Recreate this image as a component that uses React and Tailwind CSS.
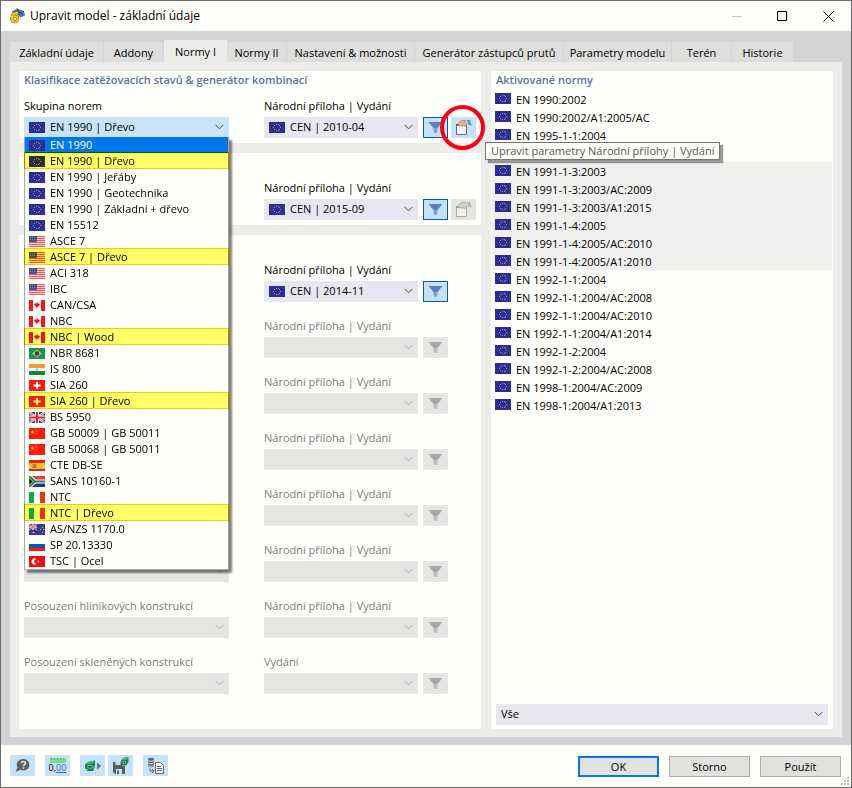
import { useState } from 'react';

const EuFlag = () => (
  <>
    <rect width="16" height="11" fill="#2b2d9b" />
    <path
      d="M7 2h1v1H7zM9 2h1v1H9zM5 3h1v1H5zM10 3h1v1h-1zM4 5h1v1H4zM11 5h1v1h-1zM5 7h1v1H5zM10 7h1v1h-1zM7 8h1v1H7zM9 8h1v1H9z"
      fill="#a89a58"
    />
  </>
);

const UsFlag = () => (
  <>
    <rect width="16" height="11" fill="#fbd5d7" />
    {[0, 2, 4, 6, 8, 10].map((y) => (
      <rect key={y} y={y} width="16" height="1" fill="#f4525a" />
    ))}
    <rect width="8" height="6" fill="#4a4f86" />
    <path d="M1 1.500h6M1 3.500h6" stroke="#7d80aa" strokeDasharray="1 1" />
  </>
);

const CaFlag = () => (
  <>
    <rect width="16" height="11" fill="#fff" />
    <path d="M0 0h4v11H0zM12 0h4v11h-4z" fill="#f8141c" />
    <path d="M8 2l1 1.500 2 .5-.8 2L8.400 7v1.500h-.8V7l-1.800-1L5 4l2-.5z" fill="#f8141c" />
  </>
);

const BrFlag = () => (
  <>
    <rect width="16" height="11" fill="#149552" />
    <path d="M8 1.500L13 5.500 8 9.500 3 5.500z" fill="#c9bd3c" />
    <circle cx="8" cy="5.500" r="2.200" fill="#2f3a86" />
  </>
);

const InFlag = () => (
  <>
    <rect width="16" height="11" fill="#fff" />
    <rect width="16" height="4" fill="#fb9933" />
    <rect y="7" width="16" height="4" fill="#128a2c" />
    <circle cx="8" cy="5.500" r="1.300" fill="#a9acdb" />
  </>
);

const ChFlag = () => (
  <>
    <rect width="16" height="11" fill="#fb1d0b" />
    <path d="M7 2h2v2.500h2.500v2H9V9H7V6.500H4.500v-2H7z" fill="#fff" />
  </>
);

const GbFlag = () => (
  <>
    <rect width="16" height="11" fill="#2b3a8c" />
    <path d="M0 0l16 11M16 0L0 11" stroke="#fff" strokeWidth="2.200" />
    <path d="M0 0l16 11M16 0L0 11" stroke="#e8303a" strokeWidth="0.800" />
    <path d="M8 0v11M0 5.500h16" stroke="#fff" strokeWidth="4" />
    <path d="M8 0v11M0 5.500h16" stroke="#e8202a" strokeWidth="2" />
  </>
);

const CnFlag = () => (
  <>
    <rect width="16" height="11" fill="#fb1d0b" />
    <path d="M3.500 2l.6 1.200 1.400.2-1 1 .2 1.400-1.200-.7-1.300.7.3-1.400-1-1 1.400-.2z" fill="#ffb62e" />
    <path d="M6.500 1.500h1M7.500 3.500h1M6.500 5.500h1" stroke="#f9822a" />
  </>
);

const EsFlag = () => (
  <>
    <rect width="16" height="11" fill="#fb1d0b" />
    <rect y="3" width="16" height="6" fill="#fbc42e" />
    <rect x="3.500" y="4" width="4" height="4" fill="#c5703c" />
  </>
);

const ZaFlag = () => (
  <>
    <rect width="16" height="5.500" fill="#f03c34" />
    <rect y="5.500" width="16" height="5.500" fill="#2b2d9b" />
    <path d="M0 0l6 5.500L0 11M5 5.500h11" fill="none" stroke="#fff" strokeWidth="4" />
    <path d="M0 0l6 5.500L0 11M5 5.500h11" fill="none" stroke="#1b8a5a" strokeWidth="2.200" />
    <path d="M0 2l4 3.500L0 9z" fill="#111" stroke="#d9a83a" strokeWidth="0.600" />
  </>
);

const ItFlag = () => (
  <>
    <rect width="16" height="11" fill="#fff" />
    <rect width="5" height="11" fill="#11aa44" />
    <rect x="11" width="5" height="11" fill="#fb2d11" />
  </>
);

const AuFlag = () => (
  <>
    <rect width="16" height="11" fill="#3b3a85" />
    <path d="M0 0l8 6M8 0L0 6" stroke="#f3c6cc" />
    <path d="M4 0v6M0 3h8" stroke="#fff" strokeWidth="2" />
    <path d="M4 0v6M0 3h8" stroke="#ee3c46" />
    <path d="M3.500 8.500h2M11 5.500h1M13 3.500h1M13 8.500h1M14 5.500h1" stroke="#c9c9e6" />
  </>
);

const RuFlag = () => (
  <>
    <rect width="16" height="11" fill="#fff" />
    <rect y="4" width="16" height="4" fill="#1154b8" />
    <rect y="8" width="16" height="3" fill="#fb1d0b" />
  </>
);

const TrFlag = () => (
  <>
    <rect width="16" height="11" fill="#f50a14" />
    <path d="M7.500 3.200a3 3 0 100 4.600 2.200 2.200 0 110-4.600z" fill="#fff" />
    <rect x="8.500" y="4.700" width="1.600" height="1.600" fill="#fff" />
  </>
);

const flags = {
  eu: EuFlag,
  us: UsFlag,
  ca: CaFlag,
  br: BrFlag,
  in: InFlag,
  ch: ChFlag,
  gb: GbFlag,
  cn: CnFlag,
  es: EsFlag,
  za: ZaFlag,
  it: ItFlag,
  au: AuFlag,
  ru: RuFlag,
  tr: TrFlag,
};

const Flag = ({ code, className = '' }) => {
  const Shape = flags[code];
  return (
    <svg className={`w-4 h-[11px] shrink-0 ${className}`} viewBox="0 0 16 11" aria-hidden="true">
      <Shape />
    </svg>
  );
};

const tabs = [
  { name: 'Základní údaje', width: 'min-w-[94px]' },
  { name: 'Addony', width: 'min-w-[60px]' },
  { name: 'Normy I', width: 'min-w-[63px]' },
  { name: 'Normy II', width: 'min-w-[60px]' },
  { name: 'Nastavení & možnosti', width: 'min-w-[128px]' },
  { name: 'Generátor zástupců prutů', width: 'min-w-[149px]' },
  { name: 'Parametry modelu', width: 'min-w-[108px]' },
  { name: 'Terén', width: 'min-w-[60px]' },
  { name: 'Historie', width: 'min-w-[62px]' },
];

const standardGroups = [
  { flag: 'eu', name: 'EN 1990' },
  { flag: 'eu', name: 'EN 1990 | Dřevo', marked: true },
  { flag: 'eu', name: 'EN 1990 | Jeřáby' },
  { flag: 'eu', name: 'EN 1990 | Geotechnika' },
  { flag: 'eu', name: 'EN 1990 | Základní + dřevo' },
  { flag: 'eu', name: 'EN 15512' },
  { flag: 'us', name: 'ASCE 7' },
  { flag: 'us', name: 'ASCE 7 | Dřevo', marked: true },
  { flag: 'us', name: 'ACI 318' },
  { flag: 'us', name: 'IBC' },
  { flag: 'ca', name: 'CAN/CSA' },
  { flag: 'ca', name: 'NBC' },
  { flag: 'ca', name: 'NBC | Wood', marked: true },
  { flag: 'br', name: 'NBR 8681' },
  { flag: 'in', name: 'IS 800' },
  { flag: 'ch', name: 'SIA 260' },
  { flag: 'ch', name: 'SIA 260 | Dřevo', marked: true },
  { flag: 'gb', name: 'BS 5950' },
  { flag: 'cn', name: 'GB 50009 | GB 50011' },
  { flag: 'cn', name: 'GB 50068 | GB 50011' },
  { flag: 'es', name: 'CTE DB-SE' },
  { flag: 'za', name: 'SANS 10160-1' },
  { flag: 'it', name: 'NTC' },
  { flag: 'it', name: 'NTC | Dřevo', marked: true },
  { flag: 'au', name: 'AS/NZS 1170.0' },
  { flag: 'ru', name: 'SP 20.13330' },
  { flag: 'tr', name: 'TSC | Ocel' },
];

const activeStandards = [
  {
    className: 'mb-[18px]',
    items: ['EN 1990:2002', 'EN 1990:2002/A1:2005/AC', 'EN 1995-1-1:2004'],
  },
  {
    className: 'bg-[#f0f0ef]',
    items: [
      'EN 1991-1-3:2003',
      'EN 1991-1-3:2003/AC:2009',
      'EN 1991-1-3:2003/A1:2015',
      'EN 1991-1-4:2005',
      'EN 1991-1-4:2005/AC:2010',
      'EN 1991-1-4:2005/A1:2010',
    ],
  },
  {
    className: '',
    items: [
      'EN 1992-1-1:2004',
      'EN 1992-1-1:2004/AC:2008',
      'EN 1992-1-1:2004/AC:2010',
      'EN 1992-1-1:2004/A1:2014',
      'EN 1992-1-2:2004',
      'EN 1992-1-2:2004/AC:2008',
      'EN 1998-1:2004/AC:2009',
      'EN 1998-1:2004/A1:2013',
    ],
  },
];

const designRows = [
  { id: 'd1', annex: 'Národní příloha | Vydání', value: 'CEN | 2014-11' },
  { id: 'd2', annex: 'Národní příloha | Vydání' },
  { id: 'd3', annex: 'Národní příloha | Vydání' },
  { id: 'd4', annex: 'Národní příloha | Vydání' },
  { id: 'd5', annex: 'Národní příloha | Vydání' },
  { id: 'd6', annex: 'Národní příloha | Vydání' },
  { id: 'd7', label: 'Posouzení hliníkových konstrukcí', annex: 'Národní příloha | Vydání' },
  { id: 'd8', label: 'Posouzení skleněných konstrukcí', annex: 'Vydání' },
];

const Chevron = ({ disabled }) => (
  <svg
    className={`absolute right-[5px] top-[7px] w-[9px] h-[6px] pointer-events-none ${disabled ? 'text-[#b5b5b5]' : 'text-[#4a4a4a]'}`}
    viewBox="0 0 9 6"
    fill="none"
    stroke="currentColor"
    aria-hidden="true"
  >
    <path d="M0.500 0.800l4 4 4-4" />
  </svg>
);

const SelectBox = ({ id, value, flag, disabled, label, open, children }) => {
  const background = disabled ? 'bg-[#e5e5e4]' : open ? 'bg-[#c8e4f8]' : 'bg-[#e8e6f0]';
  return (
    <div className="relative h-[21px]">
      <select
        id={id}
        disabled={disabled}
        aria-label={label}
        className={`block w-full h-[21px] appearance-none outline-none text-black ${flag ? 'pl-[26px]' : 'pl-[5px]'} ${background}`}
      >
        {value && <option>{value}</option>}
      </select>
      {flag && <Flag code={flag} className="absolute left-[5px] top-[5px] pointer-events-none" />}
      <Chevron disabled={disabled} />
      {children}
    </div>
  );
};

const FilterButton = ({ disabled }) => (
  <button
    type="button"
    aria-label="Filtr"
    disabled={disabled}
    className={`flex items-center justify-center w-[25px] h-[21px] ${disabled ? 'bg-[#e5e5e4]' : 'bg-[#c5e3f8] border border-[#0a5aa8]'}`}
  >
    <svg className="w-[15px] h-[11px]" viewBox="0 0 15 11" aria-hidden="true">
      <path d="M0.500 0h14L9.500 6h-4z" fill={disabled ? '#a9a9a9' : '#5b7fc0'} />
      <path d="M5.500 6h4v2.500L8.500 11h-2L5.500 8.500z" fill={disabled ? '#bdbdbd' : '#7da0e6'} />
    </svg>
  </button>
);

const EditButton = ({ disabled }) => (
  <button
    type="button"
    aria-label="Upravit parametry"
    disabled={disabled}
    className={`flex items-center justify-center w-[25px] h-[21px] ${disabled ? 'bg-[#e5e5e4]' : 'bg-[#c5e3f8]'}`}
  >
    <svg className="w-[17px] h-[17px]" viewBox="0 0 17 17" aria-hidden="true">
      <path d="M1.500 6.500h10v9h-10z" fill={disabled ? '#f1f1f1' : '#f7f7f5'} stroke={disabled ? '#a9a9a9' : '#6a6a6a'} />
      <path d="M1 6h11" stroke={disabled ? '#9c9c9c' : '#5e5e5e'} strokeWidth="2" />
      <path
        d="M3 5l2.500-3L9 1l3 1-.5 4-2 2-1-1.500-1.500 1L6 6.500 4 7z"
        fill={disabled ? '#cfcfcf' : '#e2b48c'}
        stroke={disabled ? '#a3a3a3' : '#a97850'}
        strokeWidth="0.700"
      />
      <path d="M11.500 1H15l2 5.500-5-1z" fill={disabled ? '#b9b9b9' : '#6f95d8'} />
      <path d="M11.500 1.500l.8 4" stroke="#eef3fb" />
    </svg>
  </button>
);

const FieldRow = ({ id, label, annex, left, value, editor, disabled }) => (
  <div className="flex">
    <div className="flex-[205] min-w-0 mr-[35px]">
      {label ? (
        <label htmlFor={`${id}-group`} className="block h-4 mb-[3px] leading-4 whitespace-nowrap">
          {label}
        </label>
      ) : (
        <div className="h-4 mb-[3px]" />
      )}
      {left || <SelectBox id={`${id}-group`} label={label ? undefined : 'Norma'} disabled={disabled} />}
    </div>
    <div className="flex-[154] min-w-0 mr-[5px]">
      <label htmlFor={`${id}-annex`} className="block h-4 mb-[3px] leading-4 whitespace-nowrap">
        {annex}
      </label>
      <SelectBox id={`${id}-annex`} value={value} flag={value ? 'eu' : undefined} disabled={disabled} />
    </div>
    <div className="flex items-end gap-[3px] w-[53px]">
      <FilterButton disabled={disabled} />
      {editor}
    </div>
  </div>
);

const StandardList = () => {
  const [current, setCurrent] = useState('EN 1990');
  return (
    <ul
      role="listbox"
      aria-label="Skupina norem"
      className="absolute z-20 left-0 right-0 top-[20px] bg-[#fffffc] border border-t-0 border-[#a8a8a8] shadow-[3px_3px_2px_rgba(0,0,0,0.5)]"
    >
      {standardGroups.map((item) => (
        <li
          key={item.name}
          role="option"
          aria-selected={item.name === current}
          onClick={() => setCurrent(item.name)}
          className={`relative flex items-start h-4 pl-1 gap-[5px] leading-4 whitespace-nowrap ${item.name === current ? 'bg-[#0078ec] text-white' : ''}`}
        >
          <Flag code={item.flag} className="mt-[3px]" />
          {item.name}
          {item.marked && (
            <span className="absolute -inset-x-px -top-px bottom-0 bg-[#ffff66] border border-[#fcc800] mix-blend-multiply" />
          )}
        </li>
      ))}
    </ul>
  );
};

const Panel = ({ title, className = '', children }) => (
  <section className={`bg-[#fffffc] px-[5px] pb-[5px] ${className}`}>
    <div className="h-[18px] mb-[9px]">
      {title && <h2 className="leading-[18px] font-semibold text-[#5b73a0] whitespace-nowrap">{title}</h2>}
    </div>
    {children}
  </section>
);

const TitleBar = () => (
  <header className="flex items-center h-[30px] pl-2 bg-[#fffffc]">
    <svg className="w-4 h-4 mr-[5px]" viewBox="0 0 16 16" aria-hidden="true">
      <path d="M3 4l5-3.500L15 3l1 4.500-4.500 2L6 4.500z" fill="#4f76b0" />
      <path d="M3 4l6-1 5 4M8 .5l3 4.500M15 3l-5 3" stroke="#26406e" fill="none" strokeWidth="0.800" />
      <path d="M9 4.800C5 4.500 2.800 7 2.800 10.700a3 3 0 106 0c0-2.600-3.200-3-4.600-1.200" fill="none" stroke="#6f5c12" strokeWidth="3.200" />
      <path d="M9 4.800C5 4.500 2.800 7 2.800 10.700a3 3 0 106 0c0-2.600-3.200-3-4.600-1.200" fill="none" stroke="#f2cf1f" strokeWidth="2" />
    </svg>
    <h1 className="text-[12px] leading-4 whitespace-nowrap">Upravit model - základní údaje</h1>
    <div className="flex ml-auto">
      <button type="button" aria-label="Minimalizovat" className="flex items-center justify-center w-[45px] h-[29px] text-[#c4c4c4]">
        <svg className="w-[11px] h-[11px]" viewBox="0 0 11 11" stroke="currentColor">
          <path d="M0 5.500h10" />
        </svg>
      </button>
      <button type="button" aria-label="Maximalizovat" className="flex items-center justify-center w-[45px] h-[29px]">
        <svg className="w-[11px] h-[11px]" viewBox="0 0 11 11" fill="none" stroke="#000">
          <path d="M0.500 0.500h9v9h-9z" />
        </svg>
      </button>
      <button type="button" aria-label="Zavřít" className="flex items-center justify-center w-[46px] h-[29px]">
        <svg className="w-[11px] h-[11px]" viewBox="0 0 11 11" stroke="#000">
          <path d="M0.500 0.500l10 10M10.500 0.500l-10 10" />
        </svg>
      </button>
    </div>
  </header>
);

const ToolButton = ({ label, children, className = '' }) => (
  <button type="button" aria-label={label} className={`flex flex-col items-center justify-center w-[25px] h-[21px] bg-[#c5e3f8] ${className}`}>
    {children}
  </button>
);

const ActionButton = ({ primary, children }) => (
  <button
    type="button"
    className={`w-[81px] h-[21px] leading-[17px] bg-[#e1e1e0] ${primary ? 'border-2 border-[#0078ec]' : 'border border-[#adadad]'}`}
  >
    {children}
  </button>
);

const Footer = () => (
  <footer className="relative flex items-start h-[42px] pl-[9px] pr-[10px] pt-[10px] bg-[#fffffc]">
    <ToolButton label="Nápověda" className="mr-[10px]">
      <svg className="w-[15px] h-[15px]" viewBox="0 0 15 15">
        <path d="M8.500 1a6 5.700 0 11-3 10.700L0.500 14l2-4.500A6 5.700 0 018.500 1z" fill="#606060" />
        <path d="M6.500 5.200c0-2.400 3.900-2.200 3.900 0 0 1.400-1.900 1.400-1.900 3M8.500 9.300v1.500" fill="none" stroke="#d6eaf8" strokeWidth="1.500" />
      </svg>
    </ToolButton>
    <ToolButton label="Jednotky" className="mr-[10px]">
      <svg className="w-4 h-[5px]" viewBox="0 0 16 5">
        <rect width="16" height="5" fill="#7ddc8c" />
        <path d="M1.500 0v2M4.500 0v2M7.500 0v2M10.500 0v2M13.500 0v2" stroke="#5cba72" />
      </svg>
      <span className="text-[9px] leading-[10px] whitespace-nowrap">
        0,<span className="text-[#3d62dd] underline">00</span>
      </span>
    </ToolButton>
    <ToolButton label="Model" className="mr-[3px]">
      <svg className="w-4 h-3" viewBox="0 0 16 12">
        <path d="M0 4.500L3 2l7-1.500V7L8 11H2l-2-3z" fill="#1b7a52" />
        <path d="M3 2l7-1.500L8 3.500 1 4.500z" fill="#41b583" />
        <path d="M3 5.500h4v2.500H3zM0 9.500h3M8 8.500l2-3" fill="none" stroke="#8fd4b4" strokeWidth="0.900" />
        <path d="M3.500 6h3v1.500h-3z" fill="#0c4530" />
        <path d="M12 2.500L16 6l-4 3.500z" fill="#5f7482" />
      </svg>
    </ToolButton>
    <ToolButton label="Uložit jako výchozí" className="mr-[10px]">
      <svg className="w-[17px] h-[17px]" viewBox="0 0 17 17">
        <path d="M1 5h9v4h3v8H3l-2-2z" fill="#5c5c5c" />
        <path d="M3.500 5h5v3h-5zM4 12h6v5H4z" fill="#c5e3f8" />
        <path d="M5 13.500h2V17H5z" fill="#5c5c5c" />
        <path d="M9 3.500L11 1l5.500-1v5L14 8.500H9.500z" fill="#1b7a52" />
        <path d="M11 1l5.500-1L14.500 3 9.500 3.500z" fill="#41b583" />
        <path d="M11 4.500h2.500v2H11z" fill="#0c4530" stroke="#8fd4b4" strokeWidth="0.800" />
      </svg>
    </ToolButton>
    <ToolButton label="Databáze">
      <svg className="w-[17px] h-[17px]" viewBox="0 0 17 17">
        <path d="M1 1.500C2 .5 6 .5 7 1.500v8C6 10.500 2 10.500 1 9.500z" fill="#6a6a6a" />
        <path d="M1 3.500c1 1 5 1 6 0M1 6c1 1 5 1 6 0M1 8.500c1 1 5 1 6 0" fill="none" stroke="#d5e6f2" strokeWidth="0.800" />
        <path d="M3 11.500v2.500h3M5 12l2 2-2 2" fill="none" stroke="#5c5c5c" />
        <path d="M8.500 5.500h5l3 3v8h-8z" fill="#fdfdfd" stroke="#6a6a6a" />
        <path d="M10 9.500h4M10 11.500h5M10 13.500h5" stroke="#5c5c5c" />
      </svg>
    </ToolButton>
    <div className="flex gap-[10px] ml-auto pt-px">
      <ActionButton primary>OK</ActionButton>
      <ActionButton>Storno</ActionButton>
      <ActionButton>Použít</ActionButton>
    </div>
    <svg className="absolute right-[2px] bottom-[2px] w-2 h-2" viewBox="0 0 8 8" fill="#bdbdbd" aria-hidden="true">
      <path d="M6 0h2v2H6zM3 3h2v2H3zM6 3h2v2H6zM0 6h2v2H0zM3 6h2v2H3zM6 6h2v2H6z" />
    </svg>
  </footer>
);

const App = () => {
  const [activeTab, setActiveTab] = useState('Normy I');

  return (
    <div className="flex flex-col min-h-screen border border-[#6b6b6b] bg-[#d3d3d6] font-['Open_Sans','Noto_Sans',sans-serif] text-[11px] text-black">
      <TitleBar />

      <main className="flex flex-col flex-1 px-[9px] pt-[9px] pb-2">
        <nav role="tablist" className="flex items-end h-[22px]">
          {tabs.map((tab) => (
            <button
              key={tab.name}
              type="button"
              role="tab"
              aria-selected={tab.name === activeTab}
              onClick={() => setActiveTab(tab.name)}
              className={`whitespace-nowrap leading-[17px] ${tab.width} ${
                tab.name === activeTab ? 'h-[22px] pt-px bg-[#ececea]' : 'h-5 bg-[#dededd] border-r border-[#d3d3d6]'
              }`}
            >
              {tab.name}
            </button>
          ))}
        </nav>

        <div className="grid grid-cols-[462fr_342fr] gap-[10px] flex-1 px-[9px] pt-[9px] pb-2 bg-[#ececea]">
          <div className="flex flex-col gap-[10px] min-w-0">
            <Panel title="Klasifikace zatěžovacích stavů & generátor kombinací">
              <FieldRow
                id="classification"
                label="Skupina norem"
                annex="Národní příloha | Vydání"
                value="CEN | 2010-04"
                left={
                  <SelectBox id="classification-group" value="EN 1990 | Dřevo" flag="eu" open>
                    <StandardList />
                  </SelectBox>
                }
                editor={
                  <div className="relative">
                    <EditButton />
                    <span className="absolute z-20 -left-[11px] -top-[12px] size-[45px] rounded-full border-4 border-[#fb0012] pointer-events-none" />
                    <div
                      role="tooltip"
                      className="absolute z-30 left-[34px] top-[25px] h-[18px] px-[5px] border border-[#767676] bg-[#fffffc] text-[#575757] leading-4 whitespace-nowrap shadow-[3px_3px_1px_rgba(0,0,0,0.4)]"
                    >
                      Upravit parametry Národní přílohy | Vydání
                    </div>
                  </div>
                }
              />
            </Panel>

            <Panel>
              <FieldRow id="loads" annex="Národní příloha | Vydání" value="CEN | 2015-09" editor={<EditButton disabled />} />
            </Panel>

            <Panel className="flex-1">
              <div className="flex flex-col gap-4">
                {designRows.map((row) => (
                  <div key={row.id} className={row.value ? '' : 'text-[#7c7c7c]'}>
                    <FieldRow {...row} disabled={!row.value} />
                  </div>
                ))}
              </div>
            </Panel>
          </div>

          <section className="flex flex-col min-w-0 bg-[#fffffc]">
            <h2 className="h-[19px] pl-[5px] leading-[18px] font-semibold text-[#5b73a0]">Aktivované normy</h2>
            {activeStandards.map((group) => (
              <ul key={group.items[0]} className={`mx-px ${group.className}`}>
                {group.items.map((name) => (
                  <li key={name} className="flex items-start h-[18px] pl-[3px] pt-[3px] gap-[5px]">
                    <Flag code="eu" />
                    <span className="leading-[13px] whitespace-nowrap">{name}</span>
                  </li>
                ))}
              </ul>
            ))}
            <div className="mt-auto px-[5px] pb-1">
              <SelectBox value="Vše" label="Filtr norem" />
            </div>
          </section>
        </div>
      </main>

      <Footer />
    </div>
  );
};

export default App;
